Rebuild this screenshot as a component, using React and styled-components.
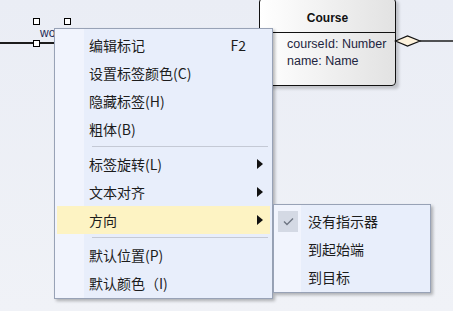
import styled, { createGlobalStyle } from "styled-components";

const Global = createGlobalStyle`
  html, body {
    margin: 0;
    padding: 0;
    background: #edf0f6;
    overflow: hidden;
  }
`;

const Canvas = styled.div`
  position: relative;
  width: 453px;
  height: 311px;
  overflow: hidden;
  background: linear-gradient(to bottom, #eaedf5, #f0f2f7);
  font-family: "Liberation Sans", Arial, sans-serif;
`;

const Connector = styled.div`
  position: absolute;
  left: ${(p) => p.$x}px;
  top: ${(p) => p.$y}px;
  width: ${(p) => p.$w}px;
  height: 2px;
  background: #1c1c1c;
`;

const Handle = styled.div`
  position: absolute;
  left: ${(p) => p.$x}px;
  top: ${(p) => p.$y}px;
  width: 5px;
  height: 5px;
  background: #fff;
  border: 1px solid #000;
`;

const LinkLabel = styled.div`
  position: absolute;
  left: 40px;
  top: 26px;
  font-size: 12px;
  color: #1d2a55;
`;

const ClassBox = styled.div`
  position: absolute;
  left: 259px;
  top: -2px;
  width: 135px;
  height: 86px;
  border: 1px solid #111;
  border-radius: 4px;
  background: linear-gradient(to right, #ffffff, #e2e2e2);
  box-shadow: 3px 3px 3px rgba(0, 0, 0, 0.18);
  display: flex;
  flex-direction: column;
`;

const ClassName = styled.div`
  height: 34px;
  box-sizing: border-box;
  border-bottom: 1px solid #111;
  display: flex;
  align-items: center;
  justify-content: center;
  padding-top: 5px;
  font-weight: bold;
  font-size: 12px;
  color: #111;
`;

const Attrs = styled.div`
  padding: 3px 0 0 27px;
  font-size: 12.5px;
  line-height: 17px;
  color: #1e2540;
`;

const Diamond = styled.svg`
  position: absolute;
  left: 394px;
  top: 34px;
`;

const Menu = styled.div`
  position: absolute;
  left: ${(p) => p.$x}px;
  top: ${(p) => p.$y}px;
  width: ${(p) => p.$w}px;
  box-sizing: border-box;
  border: 1px solid #98a2b6;
  padding: 2px 0 1px;
  background: linear-gradient(to right, #f1f4fd ${(p) => p.$gutter}px, #e8eefb ${(p) => p.$gutter}px);
  box-shadow: 2px 2px 3px rgba(0, 0, 0, 0.28);
  font-family: "Noto Sans CJK SC", "Liberation Sans", sans-serif;
  font-size: 14px;
  color: #1c1c1c;
`;

const Item = styled.div`
  display: flex;
  align-items: center;
  height: 28px;
  margin: 0 2px;
  padding-left: 2px;
  background: ${(p) => (p.$active ? "#fdf3c3" : "transparent")};
`;

const IconSlot = styled.div`
  width: 20px;
  height: 21px;
  margin-right: 10px;
  display: flex;
  align-items: center;
  justify-content: center;
  background: ${(p) => (p.$checked ? "#d4d9e4" : "transparent")};
`;

const Label = styled.span`
  flex: 1;
  white-space: nowrap;
`;

const Shortcut = styled.span`
  margin-right: 24px;
  font-family: "Noto Sans CJK SC", sans-serif;
`;

const Arrow = styled.span`
  width: 0;
  height: 0;
  margin-right: 7px;
  border-top: 5px solid transparent;
  border-bottom: 5px solid transparent;
  border-left: 6px solid #111;
`;

const Separator = styled.div`
  height: 7px;
  display: flex;
  align-items: center;
  margin: 0 4px 0 37px;
  &::after {
    content: "";
    flex: 1;
    height: 1px;
    background: #c4c9d5;
  }
`;

const Check = () => (
  <svg width="11" height="9" viewBox="0 0 11 9">
    <path d="M1 4.5 L4 7.5 L10 1.5" fill="none" stroke="#6f7683" strokeWidth="1.4" />
  </svg>
);

const mainItems = [
  { label: "编辑标记", shortcut: "F2" },
  { label: "设置标签颜色(C)" },
  { label: "隐藏标签(H)" },
  { label: "粗体(B)" },
  "sep",
  { label: "标签旋转(L)", sub: true },
  { label: "文本对齐", sub: true },
  { label: "方向", sub: true, active: true },
  "sep",
  { label: "默认位置(P)" },
  { label: "默认颜色（I)" },
];

const subItems = [
  { label: "没有指示器", checked: true },
  { label: "到起始端" },
  { label: "到目标" },
];

export default function App() {
  return (
    <Canvas>
      <Global />
      <Connector $x={0} $y={42} $w={56} />
      <Handle $x={33} $y={18} />
      <Handle $x={64} $y={18} />
      <Handle $x={33} $y={40} />
      <LinkLabel>wo</LinkLabel>

      <ClassBox>
        <ClassName>Course</ClassName>
        <Attrs>
          <div>courseId: Number</div>
          <div>name: Name</div>
        </Attrs>
      </ClassBox>
      <Diamond width="60" height="14" viewBox="0 0 60 14">
        <path d="M1.5 7 L13.5 2 L26 7 L13.5 12 Z" fill="#fdf2dc" stroke="#111" strokeWidth="1.2" />
        <line x1="26" y1="7" x2="60" y2="7" stroke="#1c1c1c" strokeWidth="1.6" />
      </Diamond>

      <Menu $x={54} $y={28} $w={219} $gutter={29}>
        {mainItems.map((it, i) =>
          it === "sep" ? (
            <Separator key={i} />
          ) : (
            <Item key={i} $active={it.active}>
              <IconSlot />
              <Label>{it.label}</Label>
              {it.shortcut && <Shortcut>{it.shortcut}</Shortcut>}
              {it.sub && <Arrow />}
            </Item>
          )
        )}
      </Menu>

      <Menu $x={273} $y={204} $w={158} $gutter={27}>
        {subItems.map((it, i) => (
          <Item key={i}>
            <IconSlot $checked={it.checked}>{it.checked && <Check />}</IconSlot>
            <Label>{it.label}</Label>
          </Item>
        ))}
      </Menu>
    </Canvas>
  );
}
